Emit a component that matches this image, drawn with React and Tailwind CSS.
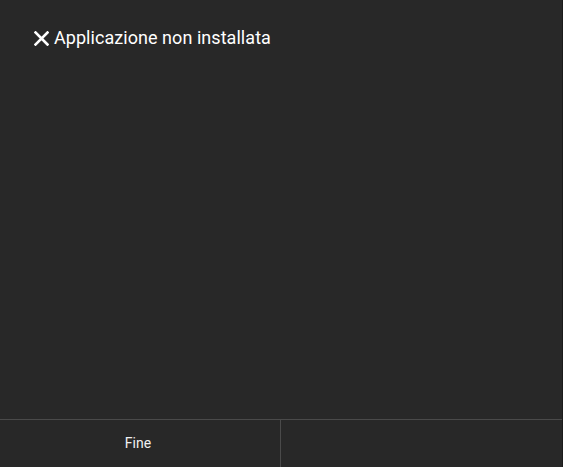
export default function App() {
  return (
    <div className="w-[563px] h-[467px] bg-[#282828] flex flex-col border-r border-[#1c1c1c]" style={{ fontFamily: 'Roboto, "Noto Sans", sans-serif' }}>
      <div className="flex items-center gap-[5px] pl-[34px] pt-[26px]">
        <svg width="15" height="15" viewBox="0 0 15 15" className="shrink-0">
          <path d="M1.5 1.5 L13.5 13.5 M13.5 1.5 L1.5 13.5" stroke="#ffffff" strokeWidth="2.6" strokeLinecap="square" />
        </svg>
        <span className="text-[18px] leading-[24px] text-white tracking-[0.05px]">Applicazione non installata</span>
      </div>
      <div className="flex-1" />
      <div className="h-[48px] border-t border-[#4a4a4a] flex">
        <div className="w-[281px] border-r border-[#4a4a4a] flex items-center justify-center pr-[4px] text-[14px] text-[#f0f0f0]">Fine</div>
        <div className="flex-1" />
      </div>
    </div>
  )
}
